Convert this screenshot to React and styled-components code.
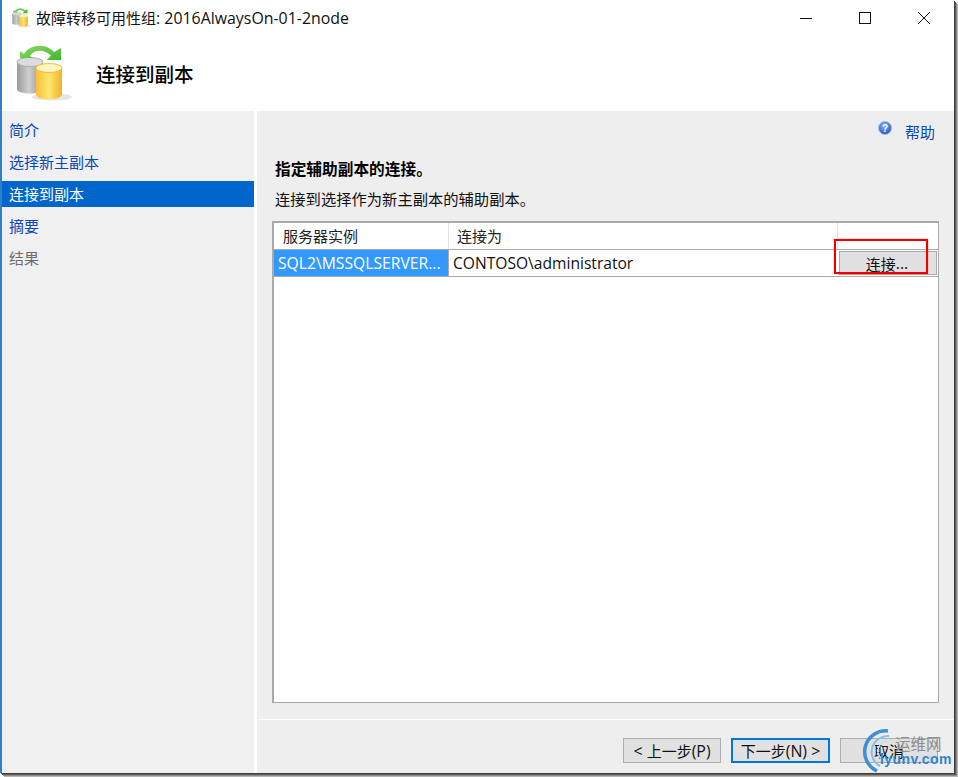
import React from 'react'
import styled, { createGlobalStyle } from 'styled-components'

const FONT = `"Open Sans", "Noto Sans CJK SC", sans-serif`

const GlobalStyle = createGlobalStyle`
  html, body {
    margin: 0;
    padding: 0;
    background: #fff;
  }
`

const NAV_ITEMS = [
  { label: '简介' },
  { label: '选择新主副本' },
  { label: '连接到副本', active: true },
  { label: '摘要' },
  { label: '结果', muted: true },
]

export default function App() {
  return (
    <>
      <GlobalStyle />
      <Screen>
        <Window>
          <TitleBar>
            <TitleLeft>
              <DbIcon size={20} id="small" />
              <TitleText>故障转移可用性组<Latin>: 2016AlwaysOn-01-2node</Latin></TitleText>
            </TitleLeft>
            <WindowButtons>
              <WindowButton><MinGlyph /></WindowButton>
              <WindowButton><MaxGlyph /></WindowButton>
              <WindowButton><CloseGlyph /></WindowButton>
            </WindowButtons>
          </TitleBar>
          <Banner>
            <DbIcon size={58} id="large" />
            <BannerTitle>连接到副本</BannerTitle>
          </Banner>
          <Body>
            <Nav>
              {NAV_ITEMS.map(item => (
                <NavItem key={item.label} $active={item.active} $muted={item.muted}>{item.label}</NavItem>
              ))}
            </Nav>
            <Main>
              <Content>
                <HelpRow>
                  <HelpBadge><HelpIcon /></HelpBadge>
                  <HelpLink>帮助</HelpLink>
                </HelpRow>
                <Heading>指定辅助副本的连接。</Heading>
                <SubHeading>连接到选择作为新主副本的辅助副本。</SubHeading>
                <TableBox>
                  <HeaderRow>
                    <HeaderCell>服务器实例</HeaderCell>
                    <HeaderCell>连接为</HeaderCell>
                    <HeaderCell />
                  </HeaderRow>
                  <DataRow>
                    <SelectedCell>SQL2\MSSQLSERVER...</SelectedCell>
                    <DataCell>CONTOSO\administrator</DataCell>
                    <ButtonCell><ConnectButton>连接<Latin>...</Latin></ConnectButton></ButtonCell>
                  </DataRow>
                  <RedMark />
                </TableBox>
              </Content>
              <Footer>
                <FooterButton><Latin>&lt;&nbsp;</Latin>上一步<Latin>(P)</Latin></FooterButton>
                <FooterButton $primary>下一步<Latin>(N)&nbsp;&gt;</Latin></FooterButton>
                <FooterButton>取消</FooterButton>
              </Footer>
            </Main>
          </Body>
          <Watermark>
            <WatermarkArcs />
            <WatermarkCn>运维网</WatermarkCn>
            <WatermarkEn>lyunv.com</WatermarkEn>
          </Watermark>
        </Window>
      </Screen>
    </>
  )
}

const DbIcon = ({ size, id }) => (
  <svg width={size} height={size} viewBox="0 0 58 58">
    <defs>
      <linearGradient id={`${id}Grey`} x1="0" x2="1" y1="0" y2="0">
        <stop offset="0" stopColor="#9a9a9a" />
        <stop offset="0.45" stopColor="#cfcfcf" />
        <stop offset="1" stopColor="#8f8f8f" />
      </linearGradient>
      <linearGradient id={`${id}Yellow`} x1="0" x2="1" y1="0" y2="0">
        <stop offset="0" stopColor="#f9bd38" />
        <stop offset="0.5" stopColor="#ffe76e" />
        <stop offset="1" stopColor="#f3b02a" />
      </linearGradient>
      <linearGradient id={`${id}Arrow`} x1="0" x2="1" y1="0" y2="1">
        <stop offset="0" stopColor="#8edb63" />
        <stop offset="1" stopColor="#3cb62e" />
      </linearGradient>
    </defs>
    <ellipse cx="36" cy="52" rx="20" ry="3.5" fill="#000" opacity="0.1" />
    <path d="M1 17 V44 C1 50 27 50 27 44 V17 Z" fill={`url(#${id}Grey)`} />
    <ellipse cx="14" cy="17" rx="13" ry="4.5" fill="#dcdcdc" stroke="#b0b0b0" />
    <path d="M20 23 V49 C20 56 46 56 46 49 V23 Z" fill={`url(#${id}Yellow)`} />
    <ellipse cx="33" cy="23" rx="13" ry="4.5" fill="#fff6bd" stroke="#f4bb3c" />
    <path d="M8 9 C14 -1 30 -2 38 7 L45 3 V15 H31 L35 10.5 C28 4 18 4 14 11 L17 13 H4 L4 6 Z" fill={`url(#${id}Arrow)`} />
  </svg>
)

const MinGlyph = () => (
  <svg width="12" height="12" viewBox="0 0 12 12"><path d="M0 6.5H12" stroke="#111" strokeWidth="1" /></svg>
)

const MaxGlyph = () => (
  <svg width="12" height="12" viewBox="0 0 12 12"><rect x="0.5" y="0.5" width="11" height="11" fill="none" stroke="#111" strokeWidth="1" /></svg>
)

const CloseGlyph = () => (
  <svg width="12" height="12" viewBox="0 0 12 12"><path d="M0 0L12 12M12 0L0 12" stroke="#111" strokeWidth="1" /></svg>
)

const HelpIcon = () => (
  <svg width="14" height="14" viewBox="0 0 14 14">
    <defs>
      <radialGradient id="helpBall" cx="0.45" cy="0.35" r="0.7">
        <stop offset="0" stopColor="#8fb4f2" />
        <stop offset="1" stopColor="#1c4fc0" />
      </radialGradient>
    </defs>
    <circle cx="7" cy="7" r="6.5" fill="url(#helpBall)" stroke="#9db7e6" />
    <text x="7" y="10.5" textAnchor="middle" fontSize="10" fontWeight="700" fontFamily="Liberation Sans" fill="#fff">?</text>
  </svg>
)

const WatermarkArcs = () => (
  <svg width="50" height="46" viewBox="0 0 50 46">
    <path d="M33 2 A21 21 0 0 0 22 42" fill="none" stroke="#3f8fd6" strokeWidth="3.5" />
    <path d="M34 7 A16 16 0 0 0 25 37" fill="none" stroke="#86c0ea" strokeWidth="2" />
    <path d="M33 12 A10 10 0 0 0 27 30" fill="none" stroke="#c3e0f4" strokeWidth="1.5" />
  </svg>
)

const Screen = styled.div`
  width: 958px;
  height: 777px;
  overflow: hidden;
  background: #fff;
  font-family: ${FONT};
`

const Latin = styled.span`
  font-size: 15.9px;
`

const Window = styled.div`
  position: relative;
  width: 954px;
  height: 773px;
  box-sizing: border-box;
  border-left: 2px solid #2f80c8;
  background: #fff;
  display: flex;
  flex-direction: column;
  box-shadow: 1px 1px 0 #3c3c3c, 2px 2px 0 #5e5e5e, 3px 3px 0 #8a8a8a, 4px 4px 0 #b5b5b5;
`

const TitleBar = styled.div`
  height: 36px;
  display: flex;
  align-items: center;
  justify-content: space-between;
`

const TitleLeft = styled.div`
  display: flex;
  align-items: center;
  gap: 4px;
  padding-left: 10px;
`

const TitleText = styled.div`
  font-size: 15px;
  color: #111;
`

const WindowButtons = styled.div`
  display: flex;
  padding-right: 1px;
`

const WindowButton = styled.div`
  width: 59px;
  height: 36px;
  display: flex;
  align-items: center;
  justify-content: center;
`

const Banner = styled.div`
  height: 75px;
  display: flex;
  align-items: center;
  gap: 22px;
  padding-left: 14px;
`

const BannerTitle = styled.div`
  font-size: 19.5px;
  font-weight: 500;
  color: #000;
`

const Body = styled.div`
  flex: 1;
  display: flex;
  gap: 3px;
  min-height: 0;
`

const Nav = styled.div`
  width: 252px;
  background: #f0f0f0;
  padding-top: 6px;
  display: flex;
  flex-direction: column;
  gap: 6px;
`

const NavItem = styled.div`
  height: 26px;
  line-height: 26px;
  padding-left: 7px;
  font-size: 15px;
  background: ${p => (p.$active ? '#0066cc' : 'transparent')};
  color: ${p => (p.$active ? '#fff' : p.$muted ? '#6d6d6d' : '#0a47b8')};
`

const Main = styled.div`
  flex: 1;
  display: flex;
  flex-direction: column;
  background: #eeeeee;
`

const Content = styled.div`
  height: 608px;
  box-sizing: border-box;
  padding: 10px 4px 0 18px;
`

const HelpRow = styled.div`
  height: 20px;
  display: flex;
  align-items: center;
  justify-content: flex-end;
  gap: 13px;
  padding-right: 15px;
`

const HelpBadge = styled.div`
  display: flex;
  margin-bottom: 6px;
`

const HelpLink = styled.span`
  font-size: 15px;
  color: #0a47b8;
`

const Heading = styled.div`
  margin-top: 17px;
  height: 22px;
  line-height: 22px;
  font-size: 15.7px;
  font-weight: 700;
  color: #000;
`

const SubHeading = styled.div`
  margin-top: 8px;
  height: 22px;
  line-height: 22px;
  font-size: 15.3px;
  color: #111;
`

const TableBox = styled.div`
  position: relative;
  margin: 11px 0 0 -3px;
  width: 667px;
  height: 482px;
  box-sizing: border-box;
  border: 2px solid #a9a9a9;
  border-bottom-width: 1px;
  border-right-width: 1px;
  background: #fff;
`

const GRID = '175px 1fr 100px'

const HeaderRow = styled.div`
  display: grid;
  grid-template-columns: ${GRID};
  height: 26px;
  border-bottom: 1px solid #a9a9a9;
`

const HeaderCell = styled.div`
  display: flex;
  align-items: center;
  padding: 0 0 1px 8px;
  font-size: 15px;
  color: #222;
  border-right: 1px solid #e2e2e2;
  &:first-child { padding-left: 9px; }
  &:last-child { border-right: none; }
`

const DataRow = styled.div`
  display: grid;
  grid-template-columns: ${GRID};
  height: 26px;
  border-bottom: 1px solid #a9a9a9;
`

const SelectedCell = styled.div`
  display: flex;
  align-items: center;
  padding: 0 0 1px 4px;
  overflow: hidden;
  white-space: nowrap;
  font-size: 15.7px;
  color: #fff;
  background: #3399ff;
  border-right: 1px solid #a9a9a9;
`

const DataCell = styled.div`
  display: flex;
  align-items: center;
  padding: 0 0 1px 4px;
  font-size: 15.6px;
  color: #111;
`

const ButtonCell = styled.div`
  display: flex;
  padding: 1px;
`

const ConnectButton = styled.div`
  flex: 1;
  display: flex;
  align-items: center;
  justify-content: center;
  padding-right: 2px;
  font-size: 15px;
  color: #111;
  background: #e1e1e1;
  border: 1px solid #a9a9a9;
`

const RedMark = styled.div`
  position: absolute;
  left: 560px;
  top: 16px;
  width: 94px;
  height: 35px;
  box-sizing: border-box;
  border: 2px solid #f00000;
  box-shadow: 0 0 1px rgba(255, 0, 0, 0.7);
  pointer-events: none;
`

const Footer = styled.div`
  flex: 1;
  box-sizing: border-box;
  border-top: 1px solid #fff;
  display: flex;
  justify-content: flex-end;
  align-items: flex-start;
  gap: 10px;
  padding: 18px 16px 0 0;
`

const FooterButton = styled.div`
  width: ${p => (p.$primary ? '99px' : '98px')};
  height: 25px;
  box-sizing: border-box;
  display: flex;
  align-items: center;
  justify-content: center;
  font-size: 15px;
  color: #111;
  background: #e1e1e1;
  border: ${p => (p.$primary ? '2px solid #0078d7' : '1px solid #adadad')};
`

const Watermark = styled.div`
  position: absolute;
  left: 853px;
  top: 729px;
  width: 105px;
  height: 46px;
  pointer-events: none;
`

const WatermarkCn = styled.div`
  position: absolute;
  left: 40px;
  top: 3px;
  font-size: 15.5px;
  color: #8c8c8c;
  white-space: nowrap;
`

const WatermarkEn = styled.div`
  position: absolute;
  left: 25px;
  top: 22px;
  font-family: "Liberation Sans", sans-serif;
  font-size: 14px;
  font-weight: 700;
  letter-spacing: 0.4px;
  color: #2f86c8;
  white-space: nowrap;
`
